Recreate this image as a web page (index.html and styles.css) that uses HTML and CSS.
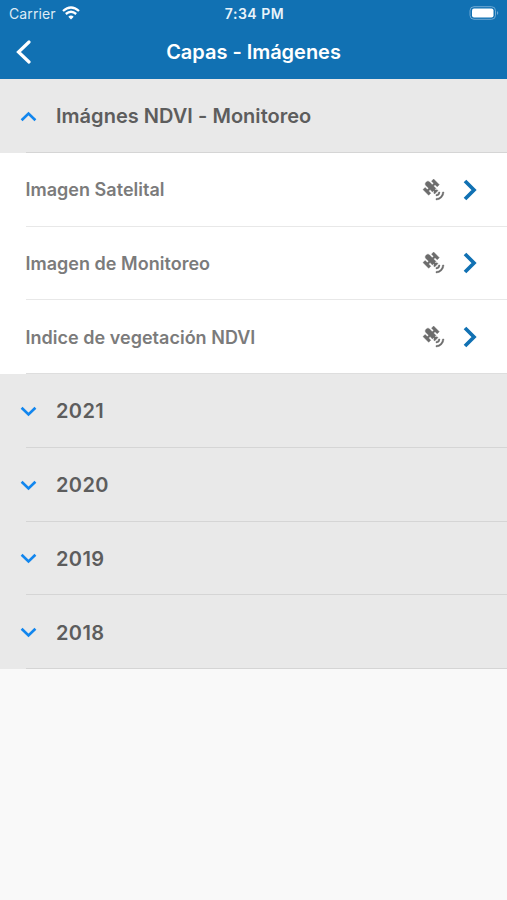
FILE: index.html
```html
<!DOCTYPE html>
<html lang="es">
<head>
<meta charset="utf-8">
<title>Capas - Imágenes</title>
<link rel="stylesheet" href="styles.css">
</head>
<body>
<svg class="defs" width="0" height="0">
  <symbol id="down" viewBox="0 0 16 10"><path d="M1.500 1.500 8 7.700l6.500-6.200" fill="none" stroke="currentColor" stroke-width="2.500"/></symbol>
  <symbol id="right" viewBox="0 0 14 22"><path d="M2 2 11 11 2 20" fill="none" stroke="currentColor" stroke-width="3.700"/></symbol>
  <symbol id="satellite" viewBox="0 0 24 24"><path fill="currentColor" stroke="currentColor" stroke-width=".4" d="M11.62,1L17.28,6.67L15.16,8.79L13.04,6.67L11.62,8.09L13.95,10.41L12.79,11.58L13.24,12.04C14.17,11.61 15.31,11.77 16.07,12.54L12.54,16.07C11.77,15.31 11.61,14.17 12.04,13.24L11.58,12.79L10.41,13.95L8.09,11.62L6.67,13.04L8.79,15.16L6.67,17.28L1,11.62L3.14,9.5L5.26,11.62L6.67,10.21L3.84,7.38C3.06,6.6 3.06,5.33 3.84,4.55L4.55,3.84C5.33,3.06 6.6,3.06 7.38,3.84L10.21,6.67L11.62,5.26L9.5,3.14L11.62,1M18,14A4,4 0 0,1 14,18V16.5A2.5,2.5 0 0,0 16.5,14H18M22,14A8,8 0 0,1 14,22V20.5A6.5,6.5 0 0,0 20.5,14H22Z"/></symbol>
</svg>
<header class="top">
  <div class="status">
    <div class="carrier"><span>Carrier</span><svg width="18" height="14" viewBox="0 0 18 14"><path d="M1 5Q9-2 17 5M3.800 8Q9 3.600 14.200 8" fill="none" stroke="#fff" stroke-width="2.300"/><path d="M6.300 10.700Q9 8.500 11.700 10.700L9 13.500Z" fill="#fff"/></svg></div>
    <span class="time">7:34 PM</span>
    <svg class="battery" width="31" height="14" viewBox="0 0 31 14"><rect x="1" y=".7" width="25.500" height="12.600" rx="4" fill="none" stroke="#70a9d3"/><rect x="3" y="2.500" width="21.500" height="9" rx="2" fill="#fff"/><path d="M28 5q2.500 2 0 4z" fill="#70a9d3"/></svg>
  </div>
  <div class="nav"><svg class="back" width="16" height="24" viewBox="0 0 16 24"><path d="M13 2 2.500 12 13 22" fill="none" stroke="#fff" stroke-width="3.200" stroke-linecap="round"/></svg><h1>Capas - Imágenes</h1></div>
</header>
<main>
  <div class="row group"><svg class="chev up"><use href="#down"/></svg><span>Imágnes NDVI - Monitoreo</span></div>
  <div class="row item"><span>Imagen Satelital</span><svg class="sat"><use href="#satellite"/></svg><svg class="go"><use href="#right"/></svg></div>
  <div class="row item"><span>Imagen de Monitoreo</span><svg class="sat"><use href="#satellite"/></svg><svg class="go"><use href="#right"/></svg></div>
  <div class="row item last"><span>Indice de vegetación NDVI</span><svg class="sat"><use href="#satellite"/></svg><svg class="go"><use href="#right"/></svg></div>
  <div class="row group"><svg class="chev"><use href="#down"/></svg><span class="year">2021</span></div>
  <div class="row group"><svg class="chev"><use href="#down"/></svg><span class="year">2020</span></div>
  <div class="row group"><svg class="chev"><use href="#down"/></svg><span class="year">2019</span></div>
  <div class="row group"><svg class="chev"><use href="#down"/></svg><span class="year">2018</span></div>
</main>
</body>
</html>
```
FILE: styles.css
```css
* { box-sizing: border-box; }
body { margin: 0; min-height: 900px; background: #f9f9f9; font-family: Inter, "Liberation Sans", sans-serif; }
.defs { display: block; height: 0; }
.top { height: 79px; background: #1171b3; color: #fff; }
.status { height: 27px; display: grid; grid-template-columns: 1fr auto 1fr; align-items: center; padding: 0 7px 0 9px; font-size: 14px; }
.carrier { display: flex; align-items: center; gap: 6px; color: #deebf5; letter-spacing: .1px; }
.carrier svg { margin-top: -2px; }
.time { font-weight: 600; font-size: 14px; letter-spacing: .5px; color: #e9f3fa; }
.battery { justify-self: end; margin-top: -1px; }
.nav { height: 50px; display: grid; grid-template-columns: 1fr auto 1fr; align-items: center; padding: 0 16px; }
h1 { margin: 0; font-size: 20px; font-weight: 600; letter-spacing: -.03px; }
.row { height: 73.750px; display: flex; align-items: center; background: linear-gradient(#d5d5d5, #d5d5d5) 26px 100% / 100% 1px no-repeat #e9e9e9; }
.group { padding: 1px 0 0 20px; gap: 19px; color: #5d5d5d; font-size: 20px; font-weight: 600; letter-spacing: .03px; }
.year { letter-spacing: .4px; }
.item { padding: 0 30px 0 25.500px; background-color: #fff; background-image: linear-gradient(#e8e8e8, #e8e8e8); color: #7b7b7b; font-size: 18px; font-weight: 600; letter-spacing: .02px; }
.last { background-image: linear-gradient(#dedede, #dedede); }
.item span { flex: 1; }
.chev { width: 17px; height: 11px; color: #1286ee; }
.up { transform: rotate(180deg); }
.sat { width: 24px; height: 24px; margin-right: 17px; color: #6c6c6c; }
.go { width: 14px; height: 22px; color: #1171b3; }
```
